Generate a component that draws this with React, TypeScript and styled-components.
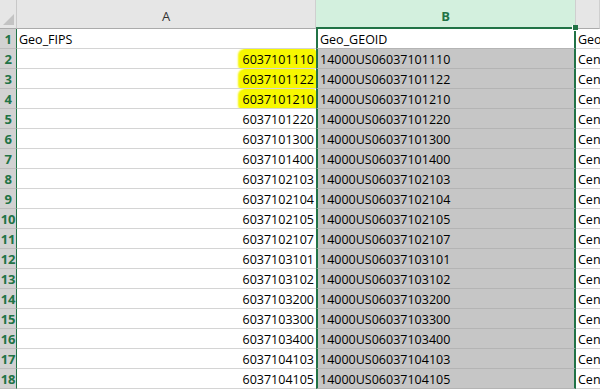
import React from "react";
import styled, { createGlobalStyle } from "styled-components";

const GREEN = "#217346";
const GRID = "#d4d4d4";

const Global = createGlobalStyle`
  html, body { margin: 0; padding: 0; background: #fff; overflow: hidden; }
  body { font-family: "Open Sans", "Liberation Sans", sans-serif; }
`;

const Sheet = styled.div`
  position: relative;
  width: 600px;
  height: 389px;
  overflow: hidden;
  font-size: 12.5px;
  color: #000;
`;

const Row = styled.div<{ $h: number }>`
  display: grid;
  grid-template-columns: 17px 299px 260px 1fr;
  height: ${(p) => p.$h}px;
`;

const Corner = styled.div`
  position: relative;
  background: #e6e6e6;
  border-bottom: 1px solid #ababab;
  border-right: 1px solid #c8c8c8;
  box-sizing: border-box;
  &::after {
    content: "";
    position: absolute;
    right: 2px;
    bottom: 3px;
    width: 0;
    height: 0;
    border-left: 11px solid transparent;
    border-bottom: 11px solid #c3c3c3;
  }
`;

const ColHead = styled.div<{ $sel?: boolean }>`
  display: flex;
  align-items: center;
  justify-content: center;
  box-sizing: border-box;
  padding-top: 4px;
  background: ${(p) => (p.$sel ? "#d3f0de" : "#e6e6e6")};
  color: ${(p) => (p.$sel ? GREEN : "#333")};
  font-weight: ${(p) => (p.$sel ? 700 : 400)};
  font-size: 13px;
  border-right: 1px solid #cfcfcf;
  border-bottom: ${(p) => (p.$sel ? `2px solid ${GREEN}` : "1px solid #ababab")};
`;

const RowHead = styled.div`
  display: flex;
  align-items: center;
  justify-content: center;
  box-sizing: border-box;
  padding-top: 1px;
  background: #d2d2d2;
  color: ${GREEN};
  font-weight: 700;
  font-size: 13px;
  border-bottom: 1px solid #bdbdbd;
  border-right: 1px solid ${GREEN};
  letter-spacing: -0.3px;
  overflow: hidden;
`;

const Cell = styled.div<{ $align?: "left" | "right"; $bg?: string; $sel?: boolean }>`
  display: flex;
  align-items: center;
  justify-content: ${(p) => (p.$align === "right" ? "flex-end" : "flex-start")};
  box-sizing: border-box;
  padding: 2px 2px 0 2px;
  background: ${(p) => p.$bg || "#fff"};
  border-bottom: 1px solid ${(p) => (p.$sel ? "#b4b4b4" : GRID)};
  border-right: ${(p) => (p.$sel ? `2px solid ${GREEN}` : "none")};
  border-left: ${(p) => (p.$sel ? `2px solid ${GREEN}` : "none")};
  white-space: nowrap;
  overflow: hidden;
`;

const Marked = styled.span`
  background: #f7f700;
  border-radius: 6px 3px 3px 6px;
  padding: 2px 2px 3px 3px;
  margin-right: -2px;
  box-shadow: -2px 0 2px #f7f700;
`;

const Handle = styled.div`
  position: absolute;
  left: 572px;
  top: 25px;
  width: 5px;
  height: 5px;
  background: ${GREEN};
  border: 1px solid #fff;
  border-top: none;
  border-right: none;
`;

const ids = [
  "6037101110",
  "6037101122",
  "6037101210",
  "6037101220",
  "6037101300",
  "6037101400",
  "6037102103",
  "6037102104",
  "6037102105",
  "6037102107",
  "6037103101",
  "6037103102",
  "6037103200",
  "6037103300",
  "6037103400",
  "6037104103",
  "6037104105",
];

const marked = new Set([0, 1, 2]);

export default function App() {
  return (
    <>
      <Global />
      <Sheet>
        <Row $h={29}>
          <Corner />
          <ColHead>A</ColHead>
          <ColHead $sel>B</ColHead>
          <ColHead />
        </Row>
        <Row $h={20}>
          <RowHead>1</RowHead>
          <Cell>Geo_FIPS</Cell>
          <Cell $sel>Geo_GEOID</Cell>
          <Cell>Geo</Cell>
        </Row>
        {ids.map((id, i) => (
          <Row $h={20} key={id}>
            <RowHead>{i + 2}</RowHead>
            <Cell $align="right">{marked.has(i) ? <Marked>{id}</Marked> : id}</Cell>
            <Cell $sel $bg="#c6c6c6">
              14000US0{id}
            </Cell>
            <Cell>Cen</Cell>
          </Row>
        ))}
        <Handle />
      </Sheet>
    </>
  );
}
